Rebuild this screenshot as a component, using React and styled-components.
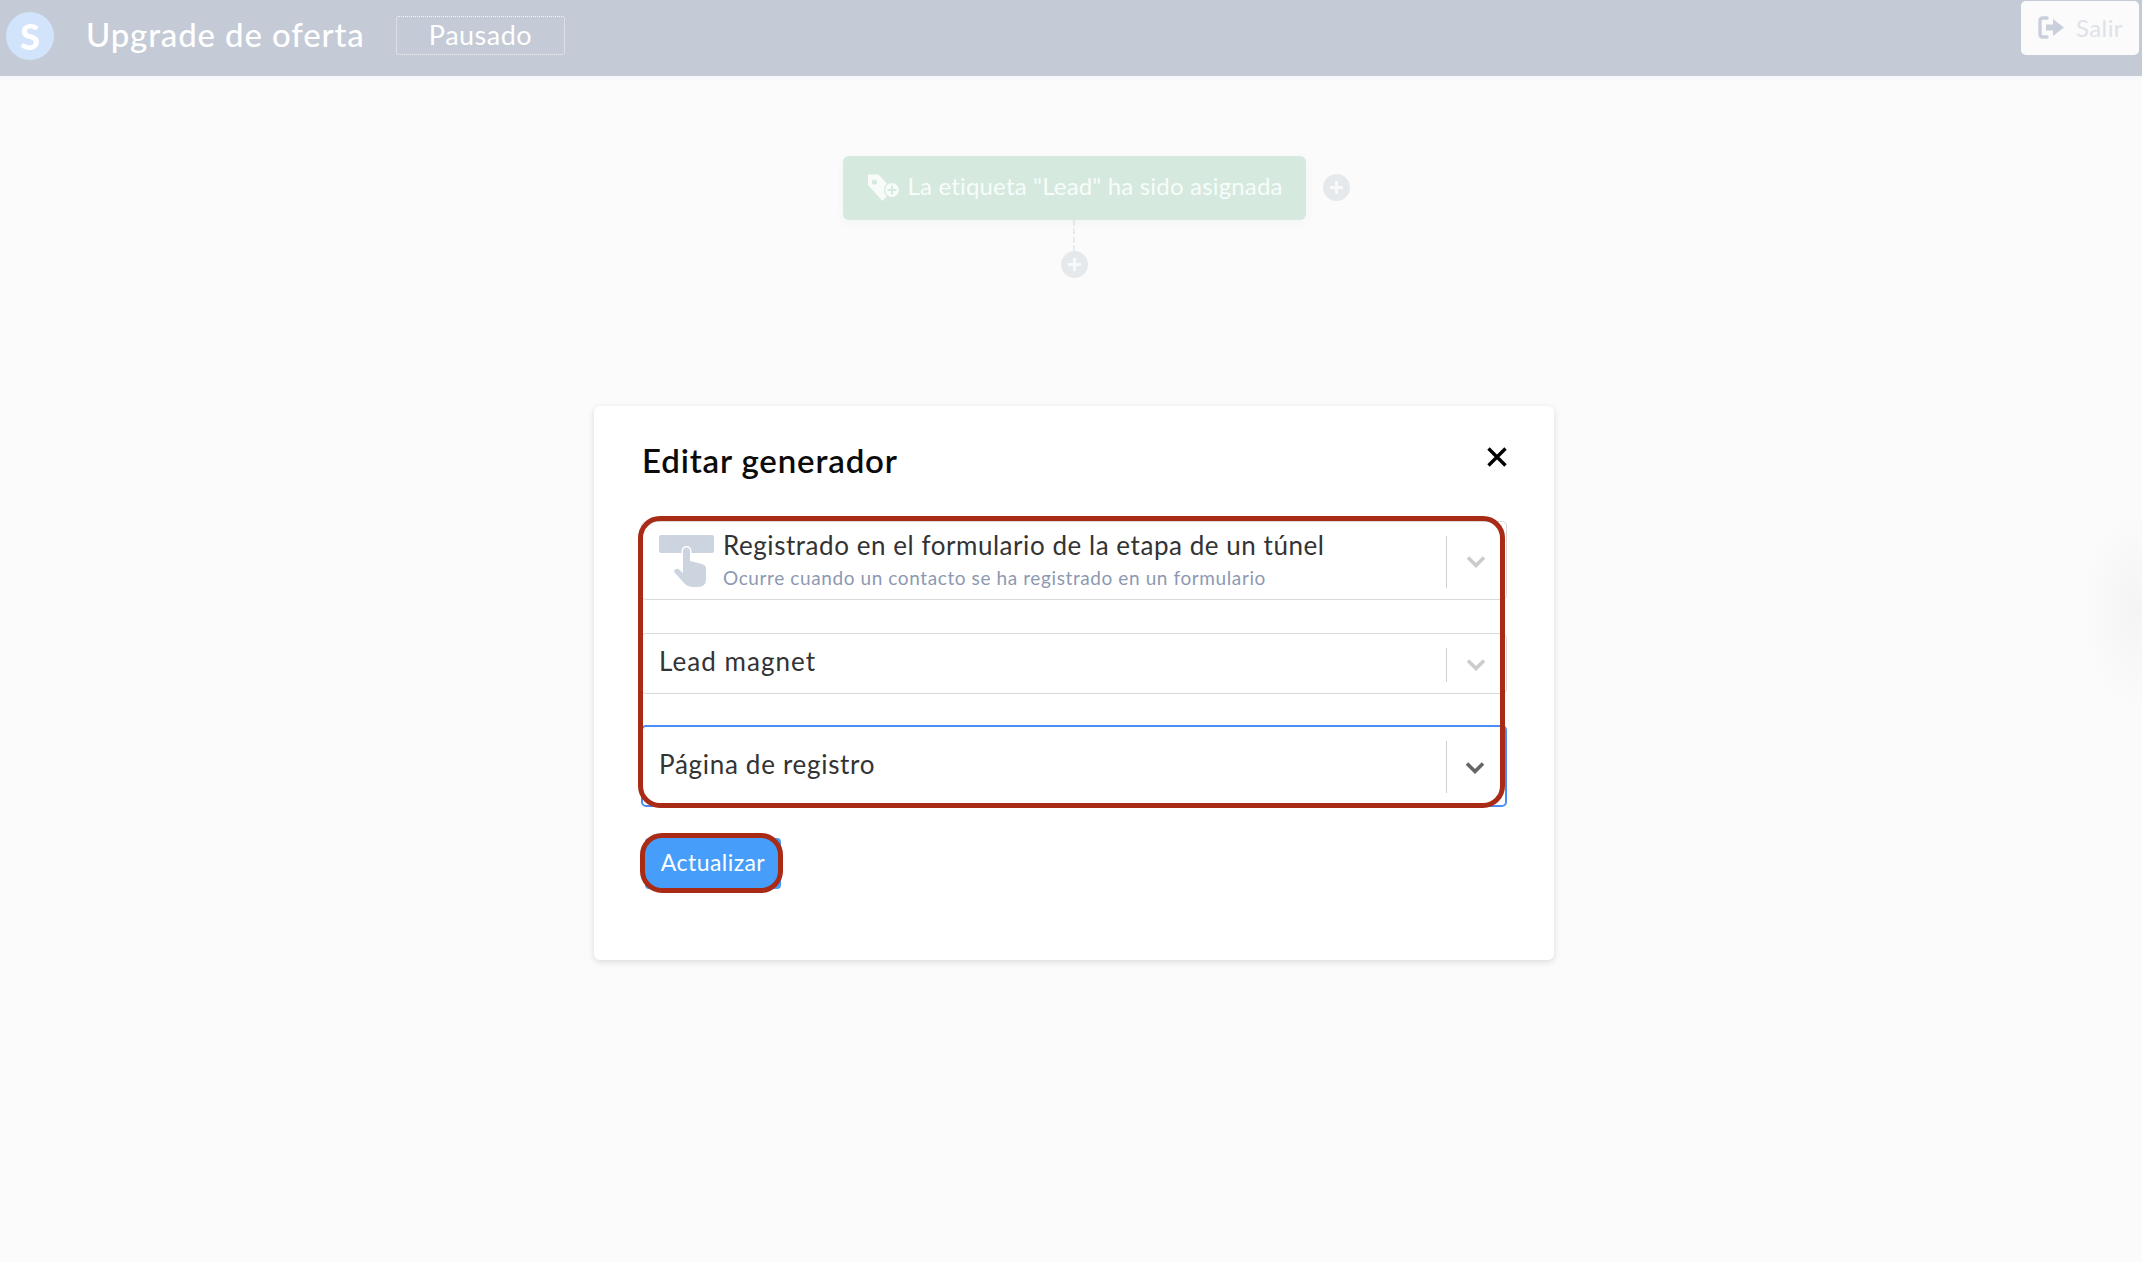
import React from "react";
import styled, { createGlobalStyle } from "styled-components";

const Global = createGlobalStyle`
  html, body { margin: 0; padding: 0; height: 100%; background: #fbfbfb; }
  body { font-family: "Lato", "Open Sans", sans-serif; overflow: hidden; }
  * { box-sizing: border-box; }
`;

const Page = styled.div`
  position: relative;
  width: 2142px;
  height: 1262px;
  background: #fbfbfb;
  overflow: hidden;
`;

const Header = styled.header`
  height: 76px;
  background: #c4cad6;
  display: flex;
  align-items: flex-start;
  padding-left: 6px;
`;

const HeaderStrip = styled.div`
  height: 4px;
  background: #f7f8f9;
`;

const Logo = styled.div`
  width: 48px;
  height: 48px;
  margin-top: 12px;
  border-radius: 50%;
  background: #d2e4fb;
  color: #fff;
  font-size: 36px;
  font-weight: 900;
  display: flex;
  align-items: center;
  justify-content: center;
`;

const Title = styled.h1`
  margin: 14px 0 0 32px;
  width: 277px;
  white-space: nowrap;
  font-size: 33px;
  line-height: 40px;
  font-weight: 500;
  color: #fff;
  letter-spacing: 0.85px;
`;

const Status = styled.div`
  margin: 16px 0 0 33px;
  width: 169px;
  height: 39px;
  border: 1px dotted #f3f4f7;
  border-radius: 3px;
  color: #fff;
  font-size: 27px;
  line-height: 35px;
  letter-spacing: 0.5px;
  text-align: center;
`;

const ExitButton = styled.button`
  margin: 1px 3px auto auto;
  width: 118px;
  height: 54px;
  border: 0;
  border-radius: 5px;
  background: #fbfbfc;
  color: #dfe2e9;
  font: inherit;
  font-size: 24px;
  display: flex;
  align-items: center;
  gap: 11px;
  padding: 0 0 2px 17px;
  letter-spacing: 0.4px;
`;

const Canvas = styled.main`
  display: flex;
  flex-direction: column;
  align-items: center;
  padding: 76px 0 0 6px;
`;

const NodeRow = styled.div`
  position: relative;
  display: flex;
  align-items: center;
`;

const Node = styled.div`
  width: 463px;
  height: 64px;
  border-radius: 6px;
  background: #d5e9df;
  box-shadow: 0 3px 8px rgba(120, 130, 150, 0.06);
  color: #f8fcfa;
  font-size: 24px;
  letter-spacing: 0.18px;
  font-weight: 400;
  white-space: nowrap;
  display: flex;
  align-items: center;
  gap: 9px;
  padding: 0 0 5px 24px;
`;

const TagWrap = styled.span`
  display: flex;
  margin-bottom: -5px;
`;

const PlusCircle = styled.div`
  width: 27px;
  height: 27px;
  border-radius: 50%;
  background: #e6e9ec;
  color: #f8f9fa;
  display: flex;
  align-items: center;
  justify-content: center;
`;

const SidePlus = styled(PlusCircle)`
  position: absolute;
  left: 480px;
  top: 18px;
`;

const Connector = styled.div`
  width: 0;
  height: 31px;
  border-left: 2px dashed #e8ebef;
`;

const EdgeShadow = styled.div`
  position: absolute;
  right: -50px;
  top: 510px;
  width: 110px;
  height: 200px;
  border-radius: 50%;
  background: radial-gradient(closest-side, rgba(120, 120, 120, 0.05), rgba(120, 120, 120, 0));
`;

const Overlay = styled.div`
  position: absolute;
  inset: 0;
  display: flex;
  justify-content: center;
  padding: 406px 0 0 6px;
`;

const Modal = styled.section`
  width: 960px;
  height: 554px;
  background: #fff;
  border-radius: 6px;
  box-shadow: 0 2px 6px rgba(70, 80, 90, 0.18);
  padding: 34px 47px 0 47px;
  position: relative;
`;

const ModalHead = styled.div`
  display: flex;
  justify-content: space-between;
  align-items: flex-start;
  height: 81px;
  padding-left: 1px;
`;

const ModalTitle = styled.h2`
  margin: 0;
  font-size: 33px;
  line-height: 41px;
  font-weight: 600;
  color: #0b0b0b;
  letter-spacing: 0.85px;
`;

const CloseIcon = styled.svg`
  margin: 7px 0 0 0;
`;

const Form = styled.div`
  position: relative;
  width: 866px;
  display: flex;
  flex-direction: column;
`;

const Select = styled.div`
  height: ${(p) => p.$h}px;
  margin-bottom: ${(p) => p.$mb}px;
  border: ${(p) => (p.$focus ? "2px solid #4a8df8" : "1px solid #d9d9d9")};
  border-radius: 5px;
  background: #fff;
  display: flex;
  align-items: center;
  padding-left: ${(p) => p.$pl}px;
  color: #333;
`;

const SelectBody = styled.div`
  flex: 1;
  min-width: 0;
  display: flex;
  align-items: center;
`;

const TriggerIcon = styled.svg`
  flex: none;
  margin: 2px 8px 0 1px;
`;

const SelectText = styled.div`
  display: flex;
  flex-direction: column;
  margin-top: -2px;
`;

const MainText = styled.div`
  font-size: 26px;
  line-height: 34px;
  color: #333;
  letter-spacing: ${(p) => p.$ls}px;
  padding-bottom: ${(p) => p.$nudge || 0}px;
`;

const SubText = styled.div`
  font-size: 19px;
  line-height: 26px;
  margin-top: 3px;
  color: #8d99b0;
  letter-spacing: 0.6px;
`;

const Indicators = styled.div`
  flex: none;
  width: ${(p) => p.$w}px;
  height: ${(p) => p.$h}px;
  margin-top: 2px;
  border-left: 1px solid #cfcfcf;
  display: flex;
  align-items: center;
  justify-content: center;
  padding-right: 2px;
`;

const Highlight = styled.div`
  position: absolute;
  left: -3px;
  top: -5px;
  width: 867px;
  height: 292px;
  border: 5px solid #a92b15;
  border-radius: 22px;
  pointer-events: none;
`;

const SubmitWrap = styled.div`
  position: relative;
  width: 136px;
  height: 51px;
  margin: 31px 0 0 4px;
`;

const Submit = styled.button`
  width: 100%;
  height: 100%;
  border: 0;
  border-radius: 4px;
  background: #469dfa;
  color: #fff;
  font: inherit;
  font-size: 23px;
  letter-spacing: 0.45px;
  padding: 0 0 3px 0;
`;

const SubmitHighlight = styled.div`
  position: absolute;
  left: -5px;
  top: -5px;
  width: 143px;
  height: 60px;
  border: 5px solid #a92b15;
  border-radius: 22px;
  pointer-events: none;
`;

const Chevron = ({ color }) => (
  <svg width="20" height="13" viewBox="0 0 20 13" fill="none">
    <path d="M2 2.5l8 8 8-8" stroke={color} strokeWidth="3.6" />
  </svg>
);

const Plus = () => (
  <svg width="15" height="15" viewBox="0 0 15 15">
    <path d="M6 1h3v5h5v3H9v5H6V9H1V6h5z" fill="currentColor" />
  </svg>
);

const TagIcon = () => (
  <svg width="32" height="28" viewBox="0 0 32 28">
    <path d="M1 1.5Q1 0.5 2 0.5H11.5L22 12 22 20 15.500 27 1 11Z" fill="#f7fbf9" />
    <circle cx="7.500" cy="8" r="2.600" fill="#d5e9df" />
    <circle cx="25" cy="16" r="7.500" fill="#f7fbf9" stroke="#d5e9df" strokeWidth="1.200" />
    <path d="M24 11.500h2v3.500h3.500v2H26v3.500h-2V17h-3.500v-2H24z" fill="#d5e9df" />
  </svg>
);

const ExitIcon = () => (
  <svg width="27" height="23" viewBox="0 0 27 23" fill="none">
    <path d="M9 2H5Q2 2 2 5V18Q2 21 5 21H9" stroke="#c9cfdb" strokeWidth="3.400" strokeLinecap="round" />
    <path d="M8 8.500H15V3L26 11.500 15 20V14.500H8Z" fill="#c9cfdb" />
  </svg>
);

const HandIcon = () => (
  <TriggerIcon width="56" height="53" viewBox="0 0 56 53">
    <rect x="0" y="0" width="55" height="18" rx="2" fill="#ccd4e0" />
    <path
      d="M24 16a3.500 3.500 0 0 1 7 0V26l4 1 4 1 4 1q4 1 4 5V44q0 8-8 8H33q-4 0-7-3L16 38q-2-2 0-3.500q2-1.500 4 0L24 38Z"
      fill="#ccd4e0"
      stroke="#fff"
      strokeWidth="3"
      paintOrder="stroke"
    />
  </TriggerIcon>
);

export default function App() {
  return (
    <Page>
      <Global />
      <Header>
        <Logo>S</Logo>
        <Title>Upgrade de oferta</Title>
        <Status>Pausado</Status>
        <ExitButton>
          <ExitIcon />
          Salir
        </ExitButton>
      </Header>
      <HeaderStrip />
      <Canvas>
        <NodeRow>
          <Node>
            <TagWrap>
              <TagIcon />
            </TagWrap>
            La etiqueta "Lead" ha sido asignada
          </Node>
          <SidePlus>
            <Plus />
          </SidePlus>
        </NodeRow>
        <Connector />
        <PlusCircle>
          <Plus />
        </PlusCircle>
      </Canvas>
      <EdgeShadow />
      <Overlay>
        <Modal>
          <ModalHead>
            <ModalTitle>Editar generador</ModalTitle>
            <CloseIcon width="20" height="20" viewBox="0 0 20 20">
              <path d="M1.500 1.500l17 17M18.500 1.500l-17 17" stroke="#000" strokeWidth="3.400" />
            </CloseIcon>
          </ModalHead>
          <Form>
            <Select $h={79} $mb={33} $pl={16}>
              <SelectBody>
                <HandIcon />
                <SelectText>
                  <MainText $ls={0.55}>Registrado en el formulario de la etapa de un túnel</MainText>
                  <SubText>Ocurre cuando un contacto se ha registrado en un formulario</SubText>
                </SelectText>
              </SelectBody>
              <Indicators $h={52} $w={60}>
                <Chevron color="#cccccc" />
              </Indicators>
            </Select>
            <Select $h={61} $mb={31} $pl={17}>
              <SelectBody>
                <MainText $nudge={6} $ls={1.05}>Lead magnet</MainText>
              </SelectBody>
              <Indicators $h={34} $w={60}>
                <Chevron color="#cccccc" />
              </Indicators>
            </Select>
            <Select $h={82} $mb={0} $pl={16} $focus>
              <SelectBody>
                <MainText $nudge={4} $ls={0.7}>Página de registro</MainText>
              </SelectBody>
              <Indicators $h={52} $w={59}>
                <Chevron color="#666666" />
              </Indicators>
            </Select>
            <Highlight />
          </Form>
          <SubmitWrap>
            <Submit>Actualizar</Submit>
            <SubmitHighlight />
          </SubmitWrap>
        </Modal>
      </Overlay>
    </Page>
  );
}
